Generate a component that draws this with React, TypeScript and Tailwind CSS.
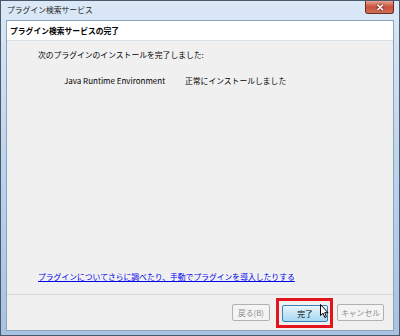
import React from 'react'

const font = { fontFamily: '"Noto Sans CJK JP", "Noto Sans", sans-serif' }

function Cursor() {
  return (
    <svg
      className="absolute left-[41px] top-[3px]"
      width="9"
      height="15"
      viewBox="0 0 9 15"
    >
      <path
        d="M0.5 0.5 L0.5 11.5 L3 9.2 L4.8 13.5 L6.4 12.8 L4.7 8.7 L8 8.7 Z"
        fill="#ffffff"
        stroke="#000000"
        strokeWidth="1"
        strokeLinejoin="round"
      />
    </svg>
  )
}

export default function App() {
  return (
    <div
      className="w-[400px] h-[336px] flex flex-col border border-[#4a5a6c] bg-gradient-to-b from-[#dbe8f6] via-[#bcd3ec] to-[#a8c3e0] text-[7.8px] leading-none text-black overflow-hidden"
      style={font}
    >
      {/* title bar */}
      <div className="h-[19px] flex items-start justify-between shrink-0">
        <span className="pl-[6px] pt-[5px] text-[#1e1e1e]">プラグイン検索サービス</span>
        <div className="mr-[5px] w-[29px] h-[13px] rounded-b-[3px] border border-[#6b2c22] border-t-0 bg-gradient-to-b from-[#e8a493] via-[#c9503a] to-[#d2705a] flex items-center justify-center">
          <span className="text-white text-[10px] font-bold leading-none drop-shadow-[0_0_1px_#3a0f08]">✕</span>
        </div>
      </div>

      {/* client area */}
      <div className="flex-1 mx-[5px] mb-[4px] flex flex-col border border-[#8da3ba] bg-[#f0f0f0]">
        <div className="h-[20px] shrink-0 bg-white border-b border-[#d5dfe5] flex items-center pl-[3px]">
          <span className="font-bold">プラグイン検索サービスの完了</span>
        </div>

        <div className="flex-1 flex flex-col pl-[31px] pt-[10px]">
          <p>次のプラグインのインストールを完了しました:</p>
          <div className="flex pl-[26px] mt-[18px]">
            <span className="w-[121px] text-[8px]">Java Runtime Environment</span>
            <span>正常にインストールしました</span>
          </div>
          <a className="mt-auto mb-[13px] text-[#0000ee] underline underline-offset-1 decoration-[#0000ee]">
            プラグインについてさらに調べたり、手動でプラグインを導入したりする
          </a>
        </div>

        <div className="h-[36px] shrink-0 border-t border-[#d5d5d5] flex items-center justify-end pr-[9px] pt-[1px]">
          <button className="w-[38px] h-[17px] mt-[-1px] rounded-[2px] border border-[#adb2b5] bg-[#f4f4f4] text-[#8d8d8d]">
            戻る(B)
          </button>
          <div className="relative ml-[6px] w-[57px] h-[30px] border-[3px] border-[#e3141b] pl-[3px] pt-[4px]">
            <button className="w-[46px] h-[17px] rounded-[2px] border border-[#3c7fb1] bg-gradient-to-b from-[#eaf6fd] via-[#c4e5f6] to-[#a7d9f5] text-black">
              完了
            </button>
            <Cursor />
          </div>
          <button className="ml-[4px] w-[47px] h-[17px] mt-[-1px] rounded-[2px] border border-[#adb2b5] bg-[#f4f4f4] text-[#8d8d8d]">
            キャンセル
          </button>
        </div>
      </div>
    </div>
  )
}
